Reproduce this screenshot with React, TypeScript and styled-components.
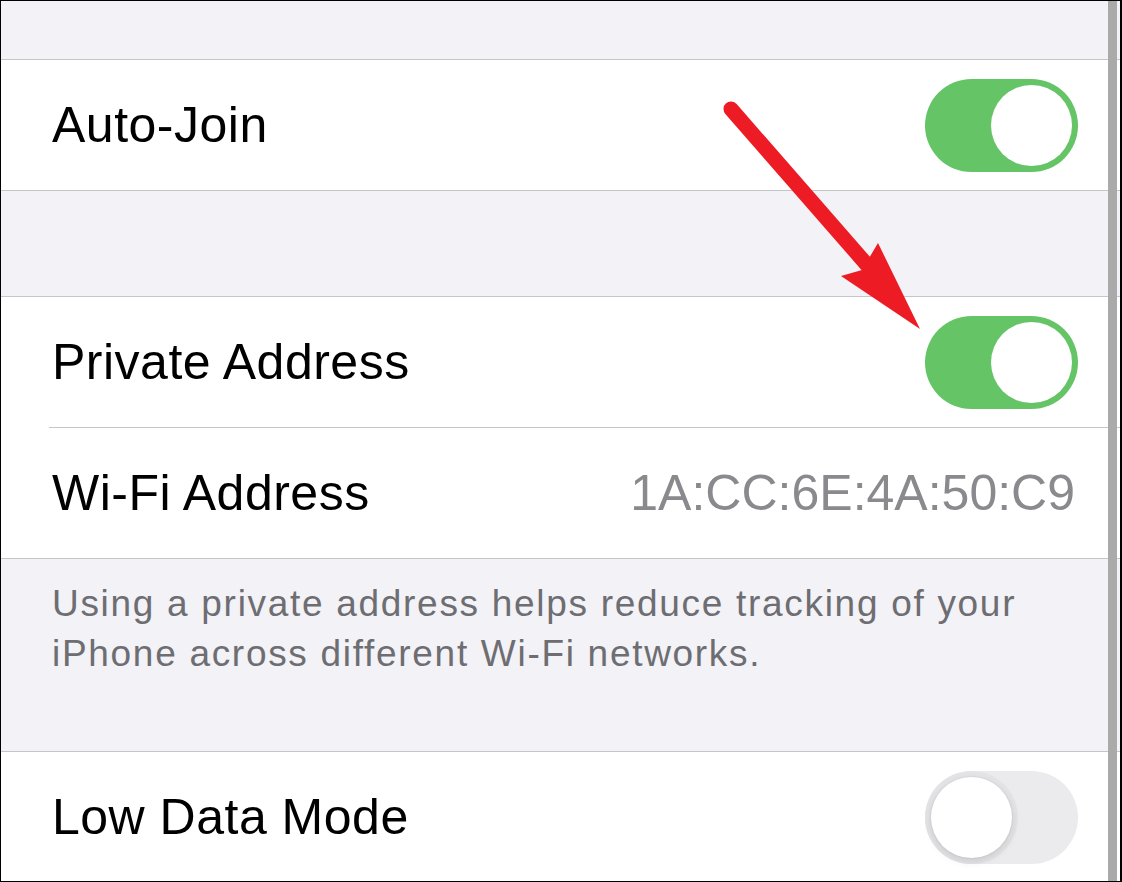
import React from "react";
import styled, { createGlobalStyle } from "styled-components";

const GlobalStyle = createGlobalStyle`
  html, body {
    margin: 0;
    padding: 0;
    background: #ffffff;
  }
  * {
    box-sizing: border-box;
  }
`;

const Page = styled.div`
  position: relative;
  width: 1122px;
  height: 882px;
  overflow: hidden;
  background: #f2f2f7;
  border-top: 1px solid #000;
  border-left: 1px solid #000;
  border-right: 2px solid #000;
  border-bottom: 1px solid #000;
  font-family: "Liberation Sans", Arial, sans-serif;
  display: flex;
  flex-direction: column;
`;

const Spacer = styled.div<{ h: number }>`
  height: ${(p) => p.h}px;
  flex-shrink: 0;
`;

const Group = styled.div`
  background: #ffffff;
  border-top: 1px solid #c6c6c8;
  border-bottom: 1px solid #c6c6c8;
  flex-shrink: 0;
`;

const Row = styled.div`
  height: 130px;
  display: flex;
  align-items: center;
  justify-content: space-between;
  padding: 0 42px 0 51px;
`;

const Label = styled.span`
  font-size: 50px;
  color: #000000;
  letter-spacing: 0.5px;
`;

const Value = styled.span`
  font-size: 50px;
  color: #8a8a8e;
  margin-right: 3px;
`;

const Divider = styled.div`
  height: 1px;
  margin-left: 48px;
  background: #c6c6c8;
`;

const Footer = styled.div`
  height: 192px;
  flex-shrink: 0;
  padding: 20px 70px 0 51px;
  font-size: 37px;
  line-height: 50px;
  letter-spacing: 1.7px;
  color: #6d6d72;
`;

const Track = styled.div<{ on: boolean }>`
  position: relative;
  width: 153px;
  height: 93px;
  border-radius: 47px;
  background: ${(p) => (p.on ? "#65c466" : "#ebebed")};
  flex-shrink: 0;
`;

const Knob = styled.div<{ on: boolean }>`
  position: absolute;
  top: 6px;
  left: ${(p) => (p.on ? "66px" : "6px")};
  width: 81px;
  height: 81px;
  border-radius: 50%;
  background: #ffffff;
  box-shadow: ${(p) =>
    p.on
      ? "none"
      : "0 0 0 1px rgba(0,0,0,0.03), 0 3px 8px rgba(0,0,0,0.12), 0 0 0 6px #e4e4e6"};
`;

const Scrollbar = styled.div`
  position: absolute;
  top: 0;
  bottom: 0;
  left: 1107px;
  width: 9px;
  background: #aaaaaa;
`;

const Overlay = styled.svg`
  position: absolute;
  top: -1px;
  left: -1px;
  pointer-events: none;
`;

const Toggle = ({ on }: { on: boolean }) => (
  <Track on={on}>
    <Knob on={on} />
  </Track>
);

export default function App() {
  return (
    <>
      <GlobalStyle />
      <Page>
        <Spacer h={58} />
        <Group>
          <Row>
            <Label>Auto-Join</Label>
            <Toggle on />
          </Row>
        </Group>
        <Spacer h={105} />
        <Group>
          <Row>
            <Label>Private Address</Label>
            <Toggle on />
          </Row>
          <Divider />
          <Row>
            <Label>Wi-Fi Address</Label>
            <Value>1A:CC:6E:4A:50:C9</Value>
          </Row>
        </Group>
        <Footer>
          Using a private address helps reduce tracking of your iPhone across
          different Wi-Fi networks.
        </Footer>
        <Group>
          <Row>
            <Label>Low Data Mode</Label>
            <Toggle on={false} />
          </Row>
        </Group>
        <Scrollbar />
        <Overlay width="1122" height="882" viewBox="0 0 1122 882">
          <line
            x1="731"
            y1="109"
            x2="868"
            y2="266"
            stroke="#ed1c24"
            strokeWidth="15"
            strokeLinecap="round"
          />
          <polygon points="920,329 841,276 862,270 878,243" fill="#ed1c24" />
        </Overlay>
      </Page>
    </>
  );
}
